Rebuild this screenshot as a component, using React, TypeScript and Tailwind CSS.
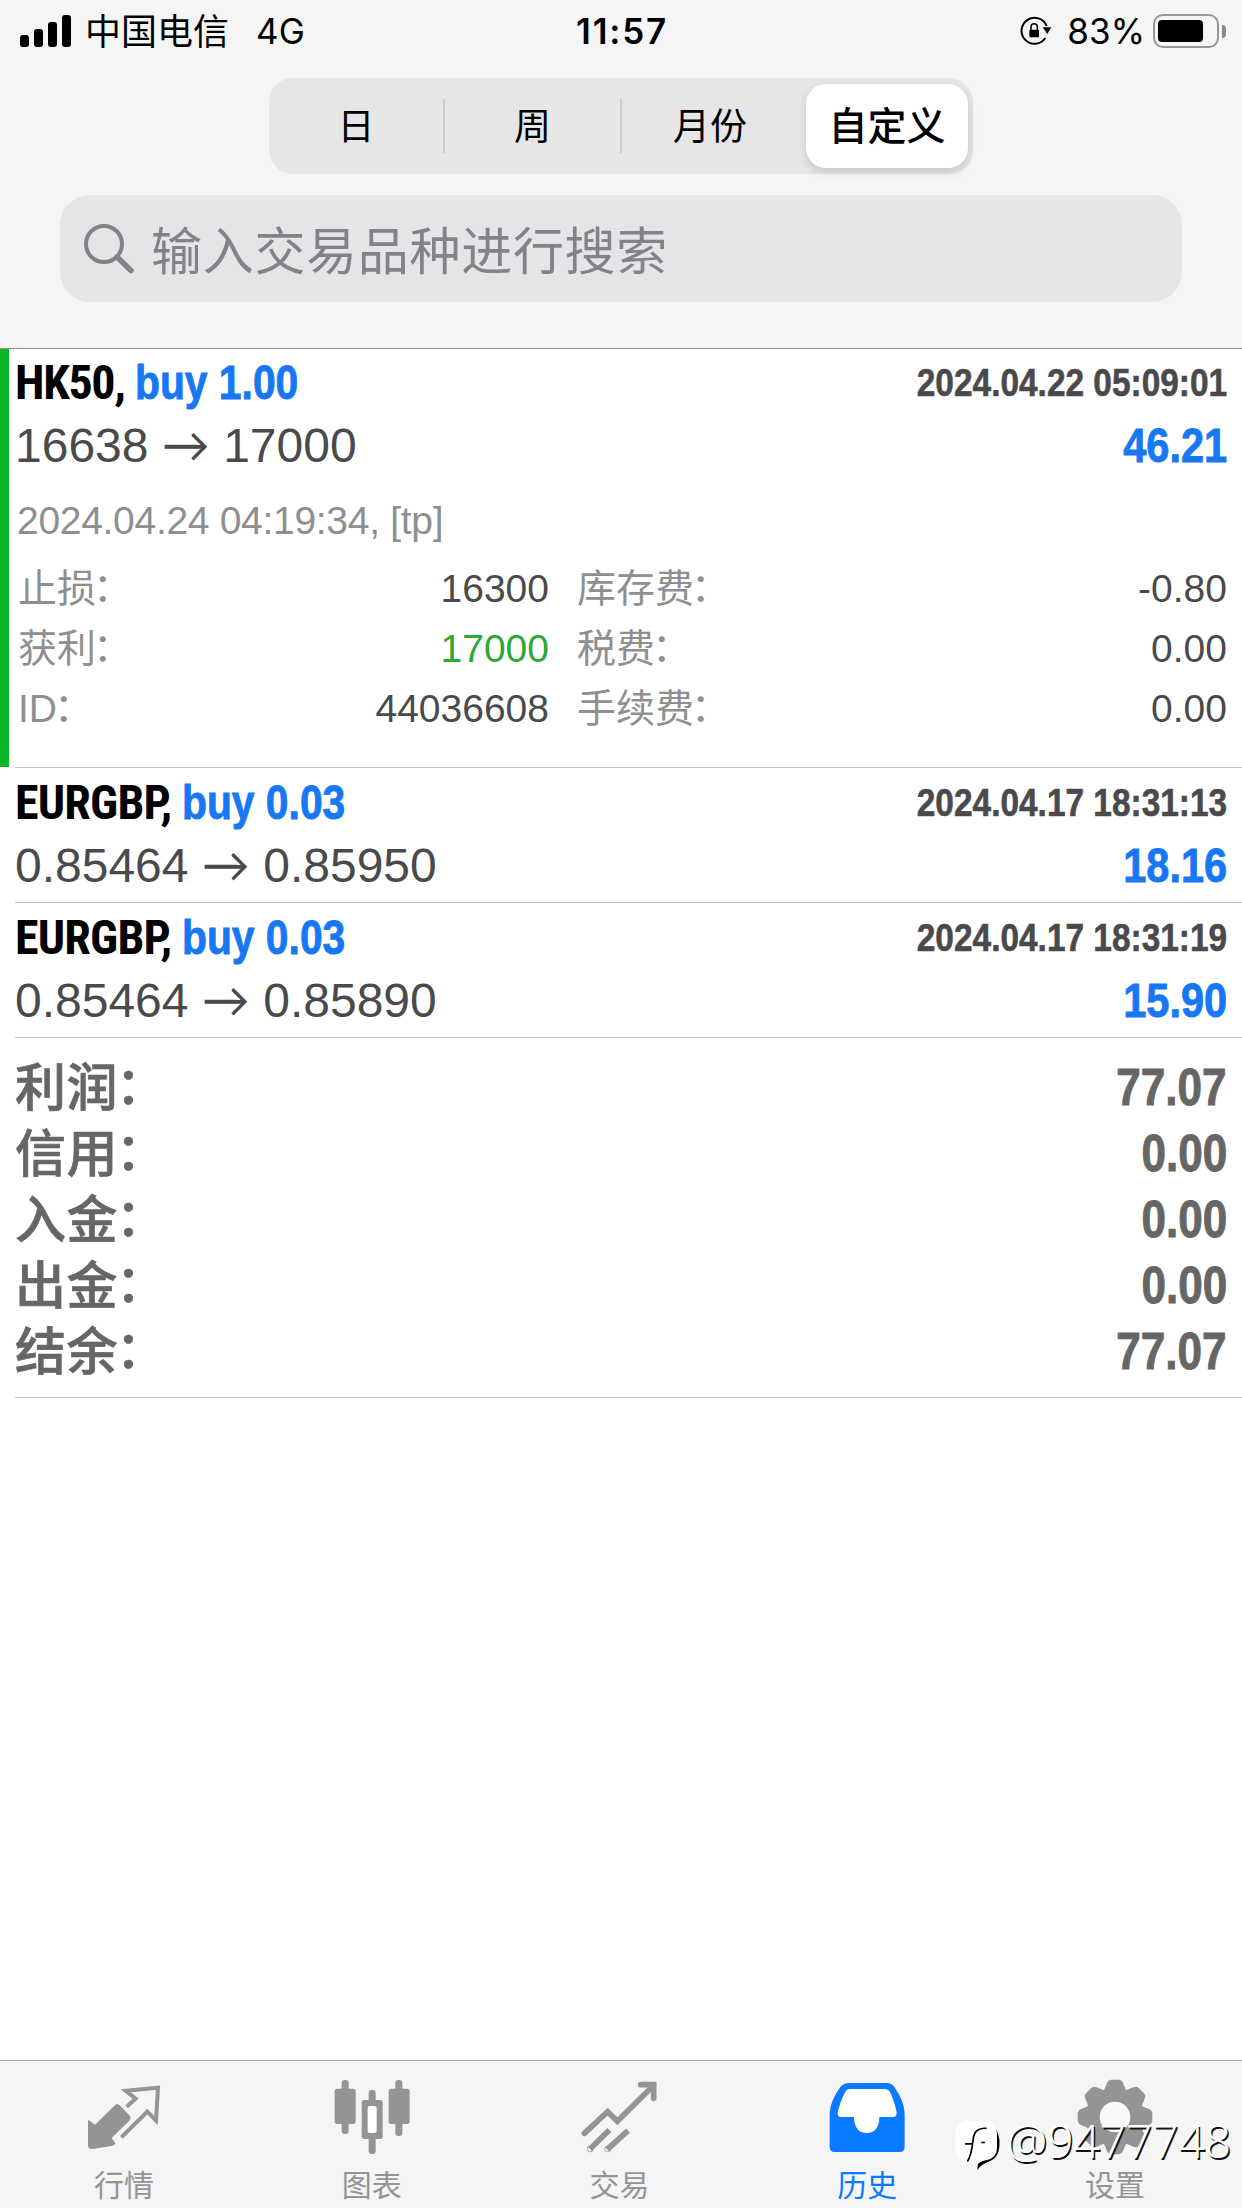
import { ReactNode } from "react";

const tabs: { label: string; icon: ReactNode; active?: boolean }[] = [
  { label: "行情", icon: <QuotesIcon /> },
  { label: "图表", icon: <ChartIcon /> },
  { label: "交易", icon: <TradeIcon /> },
  { label: "历史", icon: <HistoryIcon />, active: true },
  { label: "设置", icon: <SettingsIcon /> },
];

const summary = [
  { label: "利润", value: "77.07" },
  { label: "信用", value: "0.00" },
  { label: "入金", value: "0.00" },
  { label: "出金", value: "0.00" },
  { label: "结余", value: "77.07" },
];

export default function App() {
  return (
    <div className="relative flex h-[2208px] w-[1242px] flex-col overflow-hidden bg-white font-['Liberation_Sans','Noto_Sans_CJK_SC',sans-serif] text-[#4a4a4c]">
      <header className="h-[349px] shrink-0 border-b border-[#8e8e90] bg-[#f5f5f5]">
        <StatusBar />
        <Segments />
        <SearchField />
      </header>

      <main className="flex-1">
        <section className="flex">
          <div className="h-[418px] w-[9px] shrink-0 bg-[#0ab528]" />
          <div className="ml-[6px] h-[419px] flex-1 border-b border-[#c6c6c8] pt-[2px]">
            <Deal
              symbol="HK50"
              symbolClass="tracking-[-1.3px]"
              side="buy 1.00"
              time="2024.04.22 05:09:01"
              from="16638"
              to="17000"
              profit="46.21"
            />
            <div className="mt-[14px] mb-2 pl-[2px] text-[39px] leading-[60px] tracking-[-0.3px] text-[#8f8f8f]">
              2024.04.24 04:19:34, [tp]
            </div>
            <div className="grid grid-cols-[531px_650px] gap-x-7 pl-[3px] text-[39px] leading-[60px]">
              <Detail label="止损" value="16300" />
              <Detail label="库存费" value="-0.80" />
              <Detail label="获利" value="17000" valueClass="text-[#2ca836]" />
              <Detail label="税费" value="0.00" />
              <Detail label="ID" value="44036608" />
              <Detail label="手续费" value="0.00" />
            </div>
          </div>
        </section>

        <section className="ml-[15px] h-[135px] border-b border-[#c6c6c8] pt-[3px]">
          <Deal symbol="EURGBP" side="buy 0.03" time="2024.04.17 18:31:13" from="0.85464" to="0.85950" profit="18.16" />
        </section>
        <section className="ml-[15px] h-[135px] border-b border-[#c6c6c8] pt-[3px]">
          <Deal symbol="EURGBP" side="buy 0.03" time="2024.04.17 18:31:19" from="0.85464" to="0.85890" profit="15.90" />
        </section>

        {/* Totals */}
        <section className="ml-[15px] h-[360px] border-b border-[#c6c6c8] pt-[17px] pr-[15px] text-[51px] leading-[66px] font-bold text-[#666]">
          {summary.map((row) => (
            <div key={row.label} className="flex h-[66px] justify-between">
              <span className="pt-[1px] font-medium tracking-[0.4px] [-webkit-text-stroke:0.7px_#666]">
                {row.label}
                <span className="-ml-[2px] align-[2px] leading-none">：</span>
              </span>
              <span className="origin-right scale-x-[0.865] [-webkit-text-stroke:0.9px_#666]">{row.value}</span>
            </div>
          ))}
        </section>
      </main>

      <nav className="grid h-[148px] shrink-0 grid-cols-5 border-t border-[#a9aaa9] bg-[#f5f5f5] pr-[3px]">
        {tabs.map((tab) => (
          <div
            key={tab.label}
            className={`flex flex-col items-center pt-4 ${tab.active ? "text-[#0a7aff]" : "text-[#949494]"}`}
          >
            {tab.icon}
            <span className="mt-[11px] text-[30px] leading-9">{tab.label}</span>
          </div>
        ))}
      </nav>

      <Watermark />
    </div>
  );
}

function StatusBar() {
  return (
    <div className="grid h-[62px] grid-cols-3 items-center pr-[16px] pl-5 font-['Inter','Noto_Sans_CJK_SC',sans-serif] text-[36px] leading-none text-black">
      <div className="flex items-center">
        <div className="flex items-end gap-[5px]">
          <i className="h-3 w-[9px] rounded-[3px] bg-black" />
          <i className="h-[18px] w-[9px] rounded-[3px] bg-black" />
          <i className="h-[25px] w-[9px] rounded-[3px] bg-black" />
          <i className="h-8 w-[9px] rounded-[3px] bg-black" />
        </div>
        <span className="ml-[14px] pt-[2px]">中国电信</span>
        <span className="ml-[27px] pt-[1px] text-[35px]">4G</span>
      </div>
      <div className="pr-[2px] text-center text-[35px] font-semibold tracking-[1.800px]">11:57</div>
      <div className="flex items-center justify-end">
        <svg viewBox="0 0 96 90" className="h-[30px] w-8" fill="none">
          <path d="M80 30 A39 39 0 1 0 76 66" stroke="#000" strokeWidth="6" />
          <path d="M68 34h26L82 54z" fill="#000" />
          <rect x="28" y="41" width="29" height="23" rx="3" fill="#000" />
          <path d="M33 42v-9a9.500 9.500 0 0 1 19 0v9" stroke="#000" strokeWidth="4.500" />
        </svg>
        <span className="ml-[15px] pt-[1px] text-[35px]">83%</span>
        <div className="ml-[8px] flex h-[34px] w-[66px] items-center rounded-[10px] border-[2.500px] border-[#979797] pl-[3px]">
          <div className="h-[22px] w-[45px] rounded-[4px] bg-black" />
        </div>
        <div className="ml-[3px] h-[13px] w-1 rounded-r-full bg-[#888]" />
      </div>
    </div>
  );
}

function Segments() {
  return (
    <div className="mx-auto mt-4 flex h-24 w-[704px] items-center rounded-[24px] bg-[#e6e6e7] text-[37px] text-black">
      <div className="w-[174px] pt-1 text-center">日</div>
      <div className="h-[54px] w-[2px] bg-[#cbcbcc]" />
      <div className="w-[175px] pt-1 text-center">周</div>
      <div className="h-[54px] w-[2px] bg-[#cbcbcc]" />
      <div className="w-[184px] pt-1 pr-2 text-center">月份</div>
      <div className="flex h-[84px] w-[162px] items-center justify-center rounded-[20px] bg-white pt-[3px] text-[39px] font-medium shadow-[0_4px_10px_rgba(0,0,0,0.14)]">
        自定义
      </div>
    </div>
  );
}

function SearchField() {
  return (
    <div className="mx-[60px] mt-[21px] flex h-[107px] items-center rounded-[30px] bg-[#e5e5e7] pl-6 text-[51px] text-[#838387]">
      <svg viewBox="0 0 50 50" className="size-[50px]" fill="none" stroke="currentColor">
        <circle cx="20" cy="20" r="18" strokeWidth="4" />
        <path d="M33 33l14 13.500" strokeWidth="5.500" strokeLinecap="round" />
      </svg>
      <span className="ml-[17px] pt-[9px] tracking-[0.7px]">输入交易品种进行搜索</span>
    </div>
  );
}

interface DealProps {
  symbol: string;
  symbolClass?: string;
  side: string;
  time: string;
  from: string;
  to: string;
  profit: string;
}

function Deal({ symbol, symbolClass = "tracking-[-0.8px]", side, time, from, to, profit }: DealProps) {
  return (
    <div className="pr-[15px] text-[48px] leading-[63px]">
      <div className="flex h-[63px] justify-between font-bold">
        <div className="flex whitespace-pre">
          <span className={`font-['Roboto_Condensed'] text-black ${symbolClass}`}>{symbol}, </span>
          <span className="origin-left scale-x-[0.85] text-[#1877f2] [-webkit-text-stroke:0.9px_#1877f2]">{side}</span>
        </div>
        <div className="origin-right scale-x-[0.857] text-[39px] [-webkit-text-stroke:0.6px_#4a4a4c]">{time}</div>
      </div>
      <div className="flex h-[63px] justify-between">
        <div>
          {from} <span className="font-['Lato'] leading-none">→</span> {to}
        </div>
        <div className="origin-right scale-x-[0.865] font-bold text-[#1877f2] [-webkit-text-stroke:0.9px_#1877f2]">
          {profit}
        </div>
      </div>
    </div>
  );
}

function Detail({ label, value, valueClass = "" }: { label: string; value: string; valueClass?: string }) {
  return (
    <div className="flex h-[60px] justify-between">
      <span className="text-[#8f8f8f]">
        {label}
        <span className="-ml-[3px] align-[1px] leading-none">：</span>
      </span>
      <span className={valueClass}>{value}</span>
    </div>
  );
}

function QuotesIcon() {
  return (
    <svg viewBox="249 111 240 240" className="size-20" fill="none">
      <path
        d="M266 242 L282 254 L340 197 Q348 189 356 196 L385 226 Q392 234 385 242 L332 294 L343 310 Q342 315 336 317 L275 327 Q261 328 261 314 V240z"
        fill="currentColor"
      />
      <path d="M377 200 L404 176 L374 152 L471 143 L465 242 L439 215 L361 292" stroke="currentColor" strokeWidth="12" />
    </svg>
  );
}

function ChartIcon() {
  return (
    <svg viewBox="997 111 240 240" className="size-20" fill="none">
      <g fill="currentColor">
        <rect x="1026" y="120" width="21" height="162" rx="9" />
        <rect x="1005" y="146" width="63" height="106" rx="8" />
        <rect x="1187" y="120" width="21" height="168" rx="9" />
        <rect x="1167" y="146" width="63" height="106" rx="8" />
        <rect x="1107" y="150" width="21" height="192" rx="9" />
        <rect x="1086" y="180" width="63" height="117" rx="8" />
      </g>
      <rect x="1104" y="198" width="27" height="81" rx="7" fill="#fff" />
    </svg>
  );
}

function TradeIcon() {
  return (
    <svg viewBox="118 111 240 240" className="size-20" fill="none" stroke="currentColor" strokeWidth="17">
      <path d="M134 280 L204 215 L233 244 L340 138" strokeLinecap="round" />
      <path d="M303 134 H342 V175" strokeLinecap="round" />
      <path d="M209 270 L151 327" />
      <path d="M265 272 L203 328" />
      <circle cx="152" cy="327" r="1" />
      <circle cx="204" cy="327" r="1" />
    </svg>
  );
}

function HistoryIcon() {
  return (
    <svg viewBox="862 111 240 240" className="size-20">
      <path
        d="M930 129 H1040 Q1056 129 1064 141 C1083 168 1095 195 1095 226 V321 Q1095 336 1080 336 H885 Q870 336 870 321 V226 C870 195 883 168 902 141 Q911 129 930 129z"
        fill="currentColor"
      />
      <path
        d="M932 147 H1034 Q1046 147 1051 157 Q1063 180 1071 216 Q1072 231 1060 231 H1019 C1019 262 1006 279 981 279 C957 279 943 262 943 231 H905 Q892 231 894 216 Q902 184 916 157 Q921 147 932 147z"
        fill="#fff"
      />
    </svg>
  );
}

function SettingsIcon() {
  return (
    <svg viewBox="-120 -120 240 240" className="size-20" fill="currentColor">
      <g>
        {[0, 45, 90, 135, 180, 225, 270, 315].map((deg) => (
          <path
            key={deg}
            d="M-40 -70 Q-30 -84 -25 -100 Q-21 -112 -10 -112 H10 Q21 -112 25 -100 Q30 -84 40 -70 L30 -40 H-30z"
            transform={`rotate(${deg})`}
          />
        ))}
        <circle r="87" />
      </g>
      <circle r="46" fill="#f9f9f9" />
    </svg>
  );
}

function Watermark() {
  return (
    <div className="absolute right-[11px] bottom-[37px] flex items-end">
      <svg viewBox="100 238 140 155" className="h-[52px] w-[47px]" fill="none">
        <path
          d="M214 258 Q240 280 235 322 Q232 352 208 363 Q182 372 169 390 L172 366z"
          fill="#000"
        />
        <path
          d="M140 243 H190 Q226 243 228 285 V325 Q228 355 195 361 Q175 364 167 378 L160 366 H145 Q104 366 104 325 V285 Q104 243 140 243z"
          fill="#fff"
        />
        <path d="M197 266 Q160 262 157 300 Q152 345 140 365 M133 312 H155 M181 308 H192" stroke="#000" strokeWidth="5" />
      </svg>
      <span className="ml-[5px] pb-[5px] font-['Noto_Sans'] text-[46px] leading-[52px] font-light text-white [text-shadow:1.500px_1.500px_0_#111]">
        @9477748
      </span>
    </div>
  );
}
